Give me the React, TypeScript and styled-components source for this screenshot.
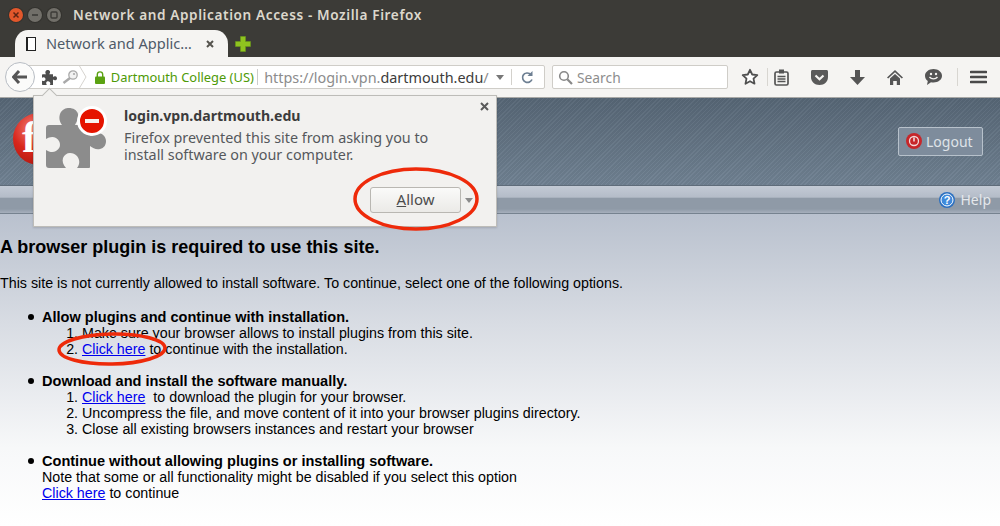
import React from "react";
import styled, { createGlobalStyle } from "styled-components";

const Global = createGlobalStyle`
  html, body { margin: 0; padding: 0; background: #fff; }
  body { width: 1000px; height: 526px; overflow: hidden; font-family: "Liberation Sans", Arial, sans-serif; }
  #root { width: 1000px; height: 526px; }
`;

const UI = `"Noto Sans", "Open Sans", sans-serif`;

const Screen = styled.div`position: relative; width: 1000px; height: 526px; overflow: hidden; display: flex; flex-direction: column;`;
const TitleBar = styled.div`height: 30px; background: #3c3b37; display: flex; align-items: center; padding-left: 9px; flex: none;`;
const WinButtons = styled.div`display: flex; gap: 5px; width: 64px; align-items: center;`;
const WinButton = styled.div<{ $c: string }>`
  width: 14px; height: 14px; border-radius: 50%; background: ${p => p.$c};
  display: flex; align-items: center; justify-content: center; box-shadow: 0 0 0 1px #33322e; flex: none;
`;
const Title = styled.div`font: 600 13.6px ${UI}; letter-spacing: 0.6px; color: #dcd8cd; white-space: nowrap; padding-bottom: 2px;`;
const TabStrip = styled.div`height: 27px; background: #3c3b37; display: flex; align-items: flex-end; padding-left: 15px; flex: none;`;
const Tab = styled.div`
  width: 213px; height: 27px; background: #f5f4f2; border-radius: 13px 13px 0 0 / 14px 14px 0 0;
  display: flex; align-items: center; padding: 0 13px 0 11px; box-sizing: border-box; gap: 10px;
`;
const TabIcon = styled.div`width: 7px; height: 12px; background: #fff; border: 1px solid #222; border-left-width: 2px; flex: none; box-sizing: content-box;`;
const TabText = styled.div`font: 400 14.6px ${UI}; color: #4f5a68; white-space: nowrap; flex: 1; padding-bottom: 2px;`;
const NewTab = styled.div`margin-left: 6px; height: 27px; display: flex; align-items: center;`;
const NavBar = styled.div`
  height: 41px; background: #f5f4f2; border-bottom: 1px solid #a8a8a6; display: flex; align-items: center;
  padding: 0 0 0 5px; flex: none; box-sizing: border-box; position: relative;
`;
const BackButton = styled.div`
  width: 30px; height: 30px; border-radius: 50%; background: #fbfbfa; border: 1px solid #b8bdc4; box-sizing: border-box;
  display: flex; align-items: center; justify-content: center; flex: none; z-index: 1;
`;
const UrlBar = styled.div`
  width: 526px; height: 24px; margin-left: -16px; background: #fff; border: 1px solid #cfcdc8; border-radius: 0 2px 2px 0;
  box-sizing: border-box; display: flex; align-items: center; padding-left: 22px; flex: none;
`;
const IdentityIcons = styled.div`display: flex; align-items: center; gap: 5px; width: 53px; height: 22px; position: relative;`;
const Chevron = styled.svg`position: absolute; left: 37px; top: 0;`;
const Lock = styled.div`width: 10px; display: flex; margin-right: 6px;`;
const Org = styled.div`font: 400 12.9px ${UI}; color: #4e9a06; white-space: nowrap; width: 147px; border-right: 1px solid #ccc; height: 16px; line-height: 16px;`;
const Url = styled.div`font: 400 14.4px ${UI}; color: #8c8c8c; white-space: nowrap; margin-left: 6px; width: 226px;`;
const UrlStrong = styled.span`color: #3c3c3c;`;
const Caret = styled.div<{ $c?: string }>`
  width: 0; height: 0; border-left: 4px solid transparent; border-right: 4px solid transparent; border-top: 5px solid ${p => p.$c ?? "#777"};
`;
const UrlEnd = styled.div`margin-left: 7px; display: flex; align-items: center; width: 48px;`;
const Sep = styled.div`width: 1px; height: 16px; background: #d3d1cc; margin-left: 7px;`;
const Reload = styled.div`margin-left: 8px; display: flex;`;
const SearchBox = styled.div`
  width: 176px; height: 24px; margin-left: 7px; background: #fff; border: 1px solid #cfcdc8; border-radius: 2px; box-sizing: border-box;
  display: flex; align-items: center; padding-left: 5px; gap: 4px; flex: none;
`;
const SearchText = styled.div`font: 400 13.8px ${UI}; color: #8d8d8d;`;
const Tools = styled.div`display: flex; align-items: center; height: 26px; margin-left: 5px;`;
const Tool = styled.div<{ $w: number }>`width: ${p => p.$w}px; display: flex; justify-content: center; flex: none;`;
const ToolSep = styled.div`width: 1px; height: 18px; background: #d8d6d1; flex: none;`;
const Header = styled.div`
  height: 88px; flex: none; display: flex; align-items: center; justify-content: flex-end; padding-right: 17px; box-sizing: border-box;
  border-bottom: 1px solid #5f6c7a;
  background:
    repeating-linear-gradient(135deg, rgba(255,255,255,0.035) 0 1px, rgba(0,0,0,0.035) 1px 3px),
    linear-gradient(180deg, #566675 0%, #708192 100%);
`;
const Logout = styled.div`
  width: 85px; height: 29px; box-sizing: border-box; border: 1px solid #b7c1cb; border-radius: 2px; background: #7e8c9c;
  display: flex; align-items: center; padding-left: 7px; gap: 4px; color: #dfe3e8; font: 400 14px ${UI}; margin-top: -1px;
`;
const SubNav = styled.div`
  height: 28px; flex: none; box-sizing: border-box; display: flex; align-items: center; justify-content: flex-end; gap: 6px; padding-right: 9px;
  border-bottom: 1px solid #76828f;
  background: linear-gradient(180deg, #c3cad5 0%, #b4bcc8 42%, #8f9aa7 44%, #8f9aa7 85%, #a6afbc 100%);
`;
const HelpText = styled.div`font: 400 14px ${UI}; color: #e5e8ec;`;
const Content = styled.main`
  flex: 1; background: linear-gradient(180deg, #b9c1ce 0%, #d8dce3 35%, #f7f8f9 75%, #ffffff 100%); color: #000;
  font: 400 14.27px/16px "Liberation Sans", Arial, sans-serif;
`;
const Heading = styled.h2`font: 700 18px/20px "Liberation Sans", Arial, sans-serif; margin: 23px 0 0;`;
const Lead = styled.p`margin: 18px 0 0;`;
const Bullets = styled.ul`margin: 18px 0 0; padding: 0 0 0 42px; list-style: none;`;
const Bullet = styled.li`
  margin-bottom: 16px; padding: 0; position: relative;
  &::before { content: ""; position: absolute; left: -14px; top: 5px; width: 6px; height: 6px; border-radius: 50%; background: #000; }
`;
const Lead2 = styled.b`font-size: 14.55px;`;
const Numbers = styled.ol`margin: 0; padding: 0 0 0 40px;`;
const Link = styled.a`color: #0000ee; text-decoration: underline;`;

const Popup = styled.div`
  position: absolute; left: 33px; top: 95px; width: 464px; height: 132px; box-sizing: border-box; background: #f2f1ef;
  border: 1px solid #bdbcb8; display: flex; z-index: 3; box-shadow: 0 1px 2px rgba(0,0,0,0.15);
  &::before {
    content: ""; position: absolute; left: 10px; top: -6px; width: 10px; height: 10px; background: #f2f1ef;
    border-left: 1px solid #bdbcb8; border-top: 1px solid #bdbcb8; transform: rotate(45deg);
  }
`;
const PopupIcon = styled.div`position: relative; width: 60px; height: 60px; margin: 12px 0 0 12px; flex: none;`;
const NoBadge = styled.div`
  position: absolute; left: 31px; top: -2px; width: 24px; height: 24px; border-radius: 50%; background: #e51400; border: 3px solid #fff;
  display: flex; align-items: center; justify-content: center;
`;
const NoBar = styled.div`width: 14px; height: 4px; background: #f7f2ee;`;
const PopupBody = styled.div`margin: 11px 0 0 18px; color: #4b4b4b; display: flex; flex-direction: column;`;
const PopupTitle = styled.div`font: 700 14.1px/17px ${UI}; color: #3c3c3c;`;
const PopupText = styled.div`font: 400 14.35px/17px ${UI}; color: #55585c; margin-top: 5px; width: 325px;`;
const PopupClose = styled.div`position: absolute; right: 7px; top: 6px; display: flex;`;
const PopupActions = styled.div`position: absolute; left: 336px; top: 91px; display: flex; align-items: center; gap: 4px;`;
const AllowButton = styled.div`
  width: 91px; height: 26px; box-sizing: border-box; border: 1px solid #b9b7b2; border-radius: 3px; padding-bottom: 2px;
  background: linear-gradient(180deg, #fafaf9, #ebeae7); display: flex; align-items: center; justify-content: center;
  font: 400 15px ${UI}; color: #4c4c4c;
`;
const Access = styled.span`text-decoration: underline;`;
const Ring = styled.svg`position: absolute; z-index: 4; overflow: visible; pointer-events: none;`;
const Logo = styled.div`
  position: absolute; left: 13px; top: 113px; width: 52px; height: 52px; border-radius: 50%; z-index: 1;
  background: radial-gradient(circle at 40% 30%, #f2827a 0%, #d9261c 45%, #9c120c 100%);
  color: #fff; font: 700 44px/50px "Liberation Serif", serif; text-indent: 9px; overflow: hidden;
`;

const PUZZLE = "M3 17H16C13 13 13 9 14 6C16 1 20 0 23 0C27 0 31 2 32 6C33 10 31 13 29 17H44V28C47 25 50 24 53 25C58 26 60 30 60 33C60 37 58 40 54 41C50 42 47 40 44 38V59C44 60 43 60 42 60H31C34 56 34 52 31 48C29 46 27 45 24 45C21 45 18 47 17 50C16 53 17 57 20 60H3C1 60 0 59 0 57V42C3 44 7 45 10 43C13 41 14 39 14 37C14 34 13 32 10 30C7 28 3 29 0 31V20C0 18 1 17 3 17Z";

const Puzzle = ({ size, color }: { size: number; color: string }) => (
  <svg width={size} height={size} viewBox="0 0 60 60"><path d={PUZZLE} fill={color} /></svg>
);

export default function App() {
  return (
    <>
      <Global />
      <Screen>
        <TitleBar>
          <WinButtons>
            <WinButton $c="#e2572b">
              <svg width="8" height="8" viewBox="0 0 8 8"><path d="M1.5 1.5l5 5M6.5 1.5l-5 5" stroke="#5d2413" strokeWidth="1.5" /></svg>
            </WinButton>
            <WinButton $c="#716f69"><svg width="8" height="8" viewBox="0 0 8 8"><path d="M1 4h6" stroke="#3c3b37" strokeWidth="1.6" /></svg></WinButton>
            <WinButton $c="#716f69"><svg width="8" height="8" viewBox="0 0 8 8"><rect x="1" y="1" width="6" height="6" rx="1" fill="none" stroke="#3c3b37" strokeWidth="1.4" /></svg></WinButton>
          </WinButtons>
          <Title>Network and Application Access - Mozilla Firefox</Title>
        </TitleBar>
        <TabStrip>
          <Tab>
            <TabIcon />
            <TabText>Network and Applic…</TabText>
            <svg width="10" height="10" viewBox="0 0 10 10" style={{ flex: "none" }}><path d="M2 2l6 6M8 2l-6 6" stroke="#55534e" strokeWidth="2" /></svg>
          </Tab>
          <NewTab>
            <svg width="18" height="18" viewBox="0 0 18 18"><path d="M6.5 1.5h5v5h5v5h-5v5h-5v-5h-5v-5h5z" fill="#8fc31f" stroke="#6a9a17" strokeWidth="0.6" /></svg>
          </NewTab>
        </TabStrip>
        <NavBar>
          <BackButton>
            <svg width="16" height="14" viewBox="0 0 16 14"><path d="M7 1L1.5 7 7 13M2 7h13" fill="none" stroke="#555" strokeWidth="3" /></svg>
          </BackButton>
          <UrlBar>
            <IdentityIcons>
              <Puzzle size={15} color="#4d4d4d" />
              <svg width="16" height="14" viewBox="0 0 16 14"><circle cx="11" cy="5" r="4.2" fill="#f2f2f2" stroke="#a9a9a9" strokeWidth="1.3" /><circle cx="12" cy="4" r="1.100" fill="#a9a9a9" /><path d="M8 8L1.500 13" stroke="#a9a9a9" strokeWidth="2.400" /></svg>
              <Chevron width="8" height="22" viewBox="0 0 8 22"><path d="M0.500 0L7 11 0.500 22" fill="none" stroke="#d6d4cf" strokeWidth="1" /></Chevron>
            </IdentityIcons>
            <Lock>
              <svg width="10" height="13" viewBox="0 0 10 13"><path d="M2.3 6V3.6a2.7 2.7 0 015.4 0V6" fill="none" stroke="#5ba212" strokeWidth="1.4" /><rect x="0" y="5.5" width="10" height="7.5" rx="1" fill="#5ba212" /></svg>
            </Lock>
            <Org>Dartmouth College (US)</Org>
            <Url>https://login.vpn.<UrlStrong>dartmouth.edu</UrlStrong>/</Url>
            <UrlEnd>
              <Caret />
              <Sep />
              <Reload>
                <svg width="14" height="14" viewBox="0 0 14 14"><path d="M11.5 8.5A4.7 4.7 0 112.5 4.5 4.7 4.7 0 0110.5 4" fill="none" stroke="#6d7f92" strokeWidth="1.7" transform="translate(0.5 1)" /><path d="M12.5 1v5h-5z" fill="#6d7f92" /></svg>
              </Reload>
            </UrlEnd>
          </UrlBar>
          <SearchBox>
            <svg width="15" height="15" viewBox="0 0 15 15"><circle cx="6" cy="6" r="4.3" fill="none" stroke="#888" strokeWidth="1.6" /><path d="M9.3 9.3L14 14" stroke="#888" strokeWidth="2.2" /></svg>
            <SearchText>Search</SearchText>
          </SearchBox>
          <Tools>
            <Tool $w={34}><svg width="18" height="18" viewBox="0 0 18 18"><path d="M9 1.8l2.2 4.7 5.1.6-3.8 3.5 1 5.1L9 13.2l-4.5 2.5 1-5.1L1.700 7.100l5.100-.6z" fill="#fff" stroke="#505050" strokeWidth="1.8" strokeLinejoin="round" /></svg></Tool>
            <ToolSep />
            <Tool $w={27}><svg width="15" height="17" viewBox="0 0 15 17"><rect x="1" y="3" width="13" height="13" rx="1.500" fill="none" stroke="#555" strokeWidth="1.7" /><rect x="5" y="0.500" width="5" height="4" fill="#555" /><path d="M3.500 7.500h8M3.500 10h8M3.500 12.500h8" stroke="#555" strokeWidth="1.400" /></svg></Tool>
            <Tool $w={48}><svg width="17" height="15" viewBox="0 0 17 15"><path d="M0 1.500C0 .6.600 0 1.500 0h14c.9 0 1.500.6 1.500 1.500V7c0 4.500-3.500 8-8.500 8S0 11.500 0 7z" fill="#5a5a5a" /><path d="M4.500 5.500l4 3.700 4-3.700" fill="none" stroke="#f5f4f2" strokeWidth="2.200" /></svg></Tool>
            <Tool $w={28}><svg width="15" height="15" viewBox="0 0 15 15"><path d="M5 0h5v7h5l-7.500 8L0 7h5z" fill="#555" /></svg></Tool>
            <Tool $w={48}><svg width="16" height="15" viewBox="0 0 16 15"><path d="M8 0l8 7.500-1.200 1L8 2.200 1.200 8.500 0 7.500zM3 8.500l5-4.500 5 4.500V15H9.800v-4H6.200v4H3z" fill="#555" /></svg></Tool>
            <Tool $w={28}><svg width="17" height="16" viewBox="0 0 17 16"><path d="M8.500 0C13 0 17 2.800 17 6.800S13 13.500 8.500 13.500c-1 0-1.800-.1-2.500-.3L2 16l.8-4C1 10.800 0 9 0 6.800 0 2.800 4 0 8.500 0z" fill="#555" /><circle cx="6" cy="5" r="1.200" fill="#f5f4f2" /><circle cx="11" cy="5" r="1.200" fill="#f5f4f2" /><path d="M4.500 8c2 2.500 6 2.500 8 0" fill="none" stroke="#f5f4f2" strokeWidth="1.300" /></svg></Tool>
            <Tool $w={20}><ToolSep /></Tool>
            <Tool $w={22}><svg width="17" height="14" viewBox="0 0 17 14"><path d="M1 2h15M1 7h15M1 12h15" stroke="#4a4a4a" strokeWidth="2.600" strokeLinecap="round" /></svg></Tool>
          </Tools>
        </NavBar>
        <Header>
          <Logout>
            <svg width="16" height="16" viewBox="0 0 16 16"><circle cx="8" cy="8" r="8" fill="#c7262a" /><circle cx="8" cy="8" r="4.500" fill="none" stroke="#f2dada" strokeWidth="1.300" /><path d="M8 4.500v4" stroke="#f2dada" strokeWidth="1.600" /></svg>
            Logout
          </Logout>
        </Header>
        <SubNav>
          <svg width="16" height="16" viewBox="0 0 16 16"><circle cx="8" cy="8" r="8" fill="#2a6fc0" /><circle cx="8" cy="8" r="6" fill="#3f8adb" stroke="#fff" strokeWidth="1" /><text x="8" y="12" textAnchor="middle" fontSize="11" fontWeight="700" fontFamily="Liberation Sans" fill="#fff">?</text></svg>
          <HelpText>Help</HelpText>
        </SubNav>
        <Content>
          <Heading>A browser plugin is required to use this site.</Heading>
          <Lead>This site is not currently allowed to install software. To continue, select one of the following options.</Lead>
          <Bullets>
            <Bullet>
              <Lead2>Allow plugins and continue with installation.</Lead2>
              <Numbers>
                <li>Make sure your browser allows to install plugins from this site.</li>
                <li><Link>Click here</Link> to continue with the installation.</li>
              </Numbers>
            </Bullet>
            <Bullet>
              <Lead2>Download and install the software manually.</Lead2>
              <Numbers>
                <li><Link>Click here</Link>&nbsp; to download the plugin for your browser.</li>
                <li>Uncompress the file, and move content of it into your browser plugins directory.</li>
                <li>Close all existing browsers instances and restart your browser</li>
              </Numbers>
            </Bullet>
            <Bullet>
              <Lead2>Continue without allowing plugins or installing software.</Lead2>
              <br />Note that some or all functionality might be disabled if you select this option
              <br /><Link>Click here</Link> to continue
            </Bullet>
          </Bullets>
        </Content>
        <Logo>f</Logo>
        <Popup>
          <PopupIcon>
            <Puzzle size={60} color="#8c8c8c" />
            <NoBadge><NoBar /></NoBadge>
          </PopupIcon>
          <PopupBody>
            <PopupTitle>login.vpn.dartmouth.edu</PopupTitle>
            <PopupText>Firefox prevented this site from asking you to install software on your computer.</PopupText>
          </PopupBody>
          <PopupClose>
            <svg width="9" height="9" viewBox="0 0 9 9"><path d="M1 1l7 7M8 1l-7 7" stroke="#5a5a5a" strokeWidth="2" /></svg>
          </PopupClose>
          <PopupActions>
            <AllowButton><span><Access>A</Access>llow</span></AllowButton>
            <Caret $c="#8b8b8b" />
          </PopupActions>
        </Popup>
        <Ring style={{ left: 352, top: 166 }} width="127" height="66" viewBox="0 0 127 66">
          <ellipse cx="64" cy="33" rx="61" ry="30" fill="none" stroke="#ee2a0a" strokeWidth="3.500" />
        </Ring>
        <Ring style={{ left: 57, top: 332 }} width="110" height="35" viewBox="0 0 110 35">
          <ellipse cx="55" cy="17" rx="53" ry="15" fill="none" stroke="#ee2a0a" strokeWidth="3.500" transform="rotate(-1 55 17)" />
        </Ring>
      </Screen>
    </>
  );
}
